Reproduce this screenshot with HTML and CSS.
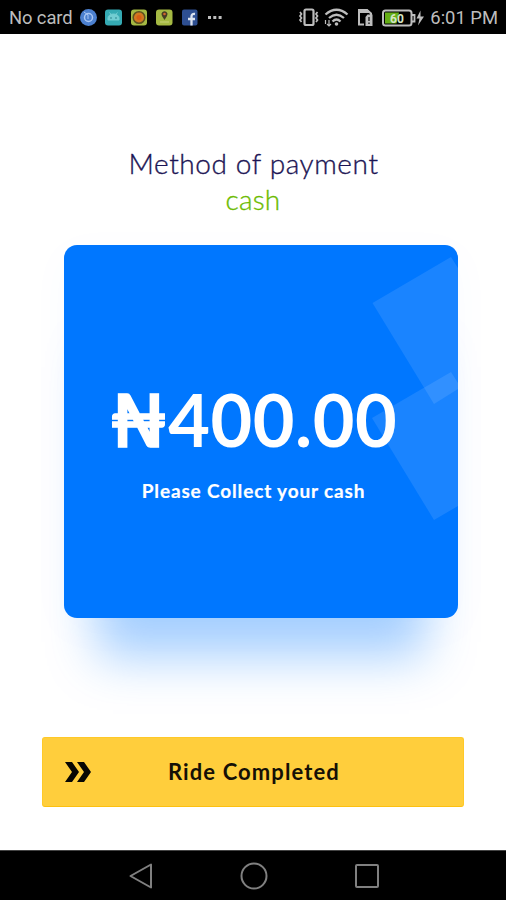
FILE: index.html
```html
<!DOCTYPE html>
<html lang="en">
<head>
<meta charset="utf-8">
<title>Ride payment</title>
<link rel="stylesheet" href="styles.css">
</head>
<body>
<div class="screen">
  <header class="status">
    <span class="carrier">No card</span>
    <svg class="apps" viewBox="80 0 148 34" width="148" height="34">
      <circle cx="88.5" cy="17.5" r="8.5" fill="#4c80cf"/>
      <circle cx="88.5" cy="17.5" r="4" fill="none" stroke="#a9c6f3" stroke-width="1.5"/>
      <path d="M84 12l4 3v4" fill="none" stroke="#a9c6f3"/>
      <rect x="105" y="9.500" width="17" height="16" rx="3" fill="#35aab3"/>
      <path d="M108 20v-2a5.500 4 0 0 1 11 0v2zM109.500 12.500l2 2.500M117.500 12.500l-2 2.500" fill="#72cdd2" stroke="#72cdd2"/>
      <circle cx="111" cy="18" r=".8" fill="#247b85"/><circle cx="116" cy="18" r=".8" fill="#247b85"/>
      <rect x="131" y="9.500" width="16" height="16" rx="3" fill="#a5b943"/>
      <circle cx="139" cy="17.500" r="5.800" fill="#d27820" stroke="#5f5120" stroke-width="1.500"/>
      <circle cx="139" cy="17.500" r="2.500" fill="#d75d15"/>
      <rect x="156" y="9.500" width="16.500" height="16" rx="3" fill="#a5b943"/>
      <path d="M164.500 20l-2.500-4a3 3 0 1 1 5 0z" fill="#463c25"/>
      <circle cx="164.500" cy="14" r="1.300" fill="#d4662d"/>
      <path d="M160 22h9" stroke="#c8d27d"/>
      <rect x="182" y="9.500" width="15.500" height="16" rx="2" fill="#2e4f91"/>
      <path d="M191.500 25.500v-9q0-3 3.500-2.500M188 19h7" fill="none" stroke="#dce3ef" stroke-width="2.300"/>
      <path d="M208 16h3v3h-3zm5.300 0h3v3h-3zm5.300 0h3v3h-3z" fill="#bdbdbd"/>
    </svg>
    <svg class="signals" viewBox="297 0 130 34" width="130" height="34" fill="none" stroke="#bdbdbd" stroke-width="1.800">
      <rect x="304.500" y="9.500" width="9" height="15.500" rx="1.500" stroke-width="2.200"/>
      <path d="M300 12l1.500 2-1.500 2 1.500 2-1.500 2 1.500 2M317.500 12l-1.500 2 1.500 2-1.500 2 1.500 2-1.500 2" stroke-width="1.700"/>
      <path d="M325.500 14.500q11-9.500 22 0M329 18q7.500-6.500 15 0M332.500 21.500q4-4 8 0" stroke-width="2.300"/>
      <circle cx="336.500" cy="24" r="1.800" fill="#bdbdbd" stroke="none"/>
      <path d="M325.500 20v4M329 20v6M327 24l2 2 2-2" stroke-width="1.200"/>
      <path d="M364 24.500h-5V10h8l4 3.500v2" stroke-width="2"/>
      <path d="M358 9h9l4 4h-13z" fill="#bdbdbd" stroke="none"/>
      <path d="M365.500 17l2-2.500h5V26h-7z" fill="#bdbdbd" stroke="none"/>
      <path d="M369 17v4M369 22.500v1.500" stroke="#111" stroke-width="1.300"/>
      <rect x="383" y="10.500" width="28.500" height="15" rx="2.500" stroke-width="2"/>
      <path d="M385 12.500h14l-2.500 11H385z" fill="#65ae16" stroke="none"/>
      <path d="M412 15h2.500v6.500H412" stroke-width="1.800"/>
      <text class="charge" x="397" y="22.500" text-anchor="middle">60</text>
      <path d="M420.500 10.500l-4 8h3l-1.500 7 6-9h-3.500z" fill="#bdbdbd" stroke="none"/>
    </svg>
    <span class="clock">6:01 PM</span>
  </header>

  <main class="content">
    <h1 class="title">Method of payment</h1>
    <p class="method">cash</p>
    <section class="card">
      <svg class="facets" viewBox="0 0 394 373" width="394" height="373" fill="#fff" fill-opacity=".1">
        <path d="M308.500 58L387 12l7 11v121l-24 15z"/>
        <path d="M308 173l79-46 7 11v123l-24 14z"/>
      </svg>
      <p class="amount"><span class="naira">₦</span>400.00</p>
      <p class="hint">Please Collect your cash</p>
    </section>
    <button class="complete">
      <svg class="chevrons" viewBox="0 0 26 20" width="26" height="20"><path d="M0 0h7l7 10-7 10H0l7-10zM12 0h7l7 10-7 10h-7l7-10z"/></svg>
      <span class="label">Ride Completed</span>
    </button>
  </main>

  <nav class="navbar">
    <svg viewBox="0 0 28 28" width="28" height="28"><path d="M24 2.500v23L3.500 14z"/></svg>
    <svg viewBox="0 0 28 28" width="28" height="28"><circle cx="14" cy="14" r="12.500"/></svg>
    <svg viewBox="0 0 28 28" width="28" height="28"><rect x="3" y="3" width="22" height="22" rx="1"/></svg>
  </nav>
</div>
</body>
</html>
```

FILE: styles.css
```css
* { box-sizing: border-box; }
body { margin: 0; background: #fff; font-family: Lato, "Liberation Sans", sans-serif; }
h1, p { margin: 0; font-weight: inherit; }
svg { display: block; flex: none; }

.screen { width: 506px; height: 900px; display: flex; flex-direction: column; overflow: hidden; }

.status { height: 34px; flex: none; display: flex; align-items: center; background: #000; color: #bdbdbd; font: 18.4px/34px Roboto, sans-serif; white-space: nowrap; padding: 2px 8px 0 9px; }
.status svg { margin-top: -2px; }
.carrier { width: 71px; letter-spacing: -.1px; }
.signals { margin-left: 69px; }
.clock { margin-left: auto; }
.charge { font: 700 12px Roboto, sans-serif; fill: #d5e5c4; stroke: none; }

.content { flex: 1; display: flex; flex-direction: column; align-items: center; padding-top: 111px; text-align: center; white-space: nowrap; }
.title, .method { font-size: 28px; line-height: 36px; font-weight: 300; -webkit-text-stroke: .35px currentColor; }
.title { color: #1c1554; letter-spacing: .6px; margin-left: 1px; }
.method { color: #6cbb00; letter-spacing: .2px; }

.card { position: relative; width: 394px; height: 373px; margin: 28px 0 0 16px; padding-top: 131px; border-radius: 13px; background: #0077ff; color: #fff; box-shadow: 0 73px 46px -33px rgba(0, 119, 255, .34), 0 10px 40px rgba(0, 119, 255, .03); }
.facets { position: absolute; inset: 0; border-radius: 13px; }
.amount { position: relative; font-size: 72px; line-height: 86px; font-weight: 700; margin-left: -15px; letter-spacing: .5px; }
.naira { letter-spacing: 1px; -webkit-text-stroke: 1.5px currentColor; }
.hint { position: relative; font-size: 19px; line-height: 24px; font-weight: 700; margin: 17px 0 0 -15px; letter-spacing: .85px; -webkit-text-stroke: .2px currentColor; }

.complete { width: 422px; height: 70px; margin-top: 119px; padding: 0 0 0 22px; display: flex; align-items: center; border: 1px solid #ffc928; border-bottom-color: #fcc010; border-radius: 3px; background: #ffce3c; color: #151006; font-family: inherit; }
.chevrons { fill: #080703; }
.label { margin-left: 77px; font-size: 22px; line-height: 30px; font-weight: 700; letter-spacing: 1.1px; }

.navbar { height: 50px; flex: none; display: flex; justify-content: center; align-items: center; gap: 85px; padding-left: 1px; background: #000; border-top: 1px solid #444; }
.navbar svg { fill: none; stroke: #808080; stroke-width: 2; stroke-linejoin: round; }
```
